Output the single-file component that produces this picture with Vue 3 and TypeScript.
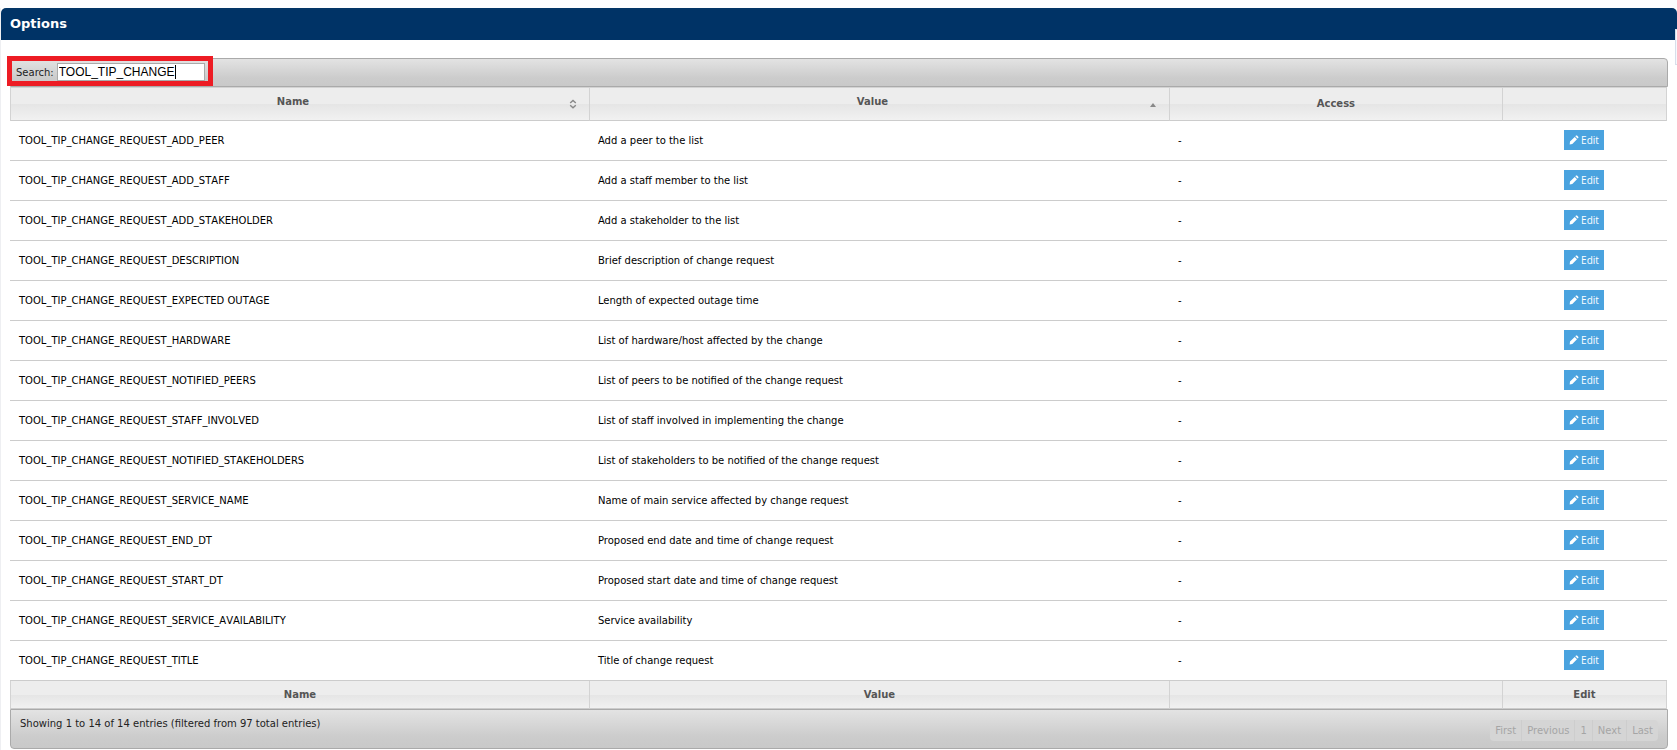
<script setup lang="ts">
import { computed, onMounted, ref } from 'vue'

interface Option {
  name: string
  value: string
}

const prefix = 'TOOL_TIP_CHANGE_REQUEST_'
const options: Option[] = [
  { name: 'ADD_PEER', value: 'Add a peer to the list' },
  { name: 'ADD_STAFF', value: 'Add a staff member to the list' },
  { name: 'ADD_STAKEHOLDER', value: 'Add a stakeholder to the list' },
  { name: 'DESCRIPTION', value: 'Brief description of change request' },
  { name: 'EXPECTED OUTAGE', value: 'Length of expected outage time' },
  { name: 'HARDWARE', value: 'List of hardware/host affected by the change' },
  { name: 'NOTIFIED_PEERS', value: 'List of peers to be notified of the change request' },
  { name: 'STAFF_INVOLVED', value: 'List of staff involved in implementing the change' },
  { name: 'NOTIFIED_STAKEHOLDERS', value: 'List of stakeholders to be notified of the change request' },
  { name: 'SERVICE_NAME', value: 'Name of main service affected by change request' },
  { name: 'END_DT', value: 'Proposed end date and time of change request' },
  { name: 'START_DT', value: 'Proposed start date and time of change request' },
  { name: 'SERVICE_AVAILABILITY', value: 'Service availability' },
  { name: 'TITLE', value: 'Title of change request' },
].map((o) => ({ name: prefix + o.name, value: o.value }))

const search = ref('TOOL_TIP_CHANGE')
const searchBox = ref<HTMLInputElement | null>(null)
const shown = computed(() => {
  const q = search.value.toLowerCase()
  return options.filter((o) => (o.name + ' ' + o.value).toLowerCase().includes(q))
})

// Text caret, kept at the end of the typed text
const pen = document.createElement('canvas').getContext('2d')
const caretLeft = computed(() => {
  if (!pen) return 2
  pen.font = '12px "Liberation Sans", Arial, sans-serif'
  return Math.min(144, Math.ceil(pen.measureText(search.value).width) + 2)
})

onMounted(() => searchBox.value?.focus())
</script>

<template>
  <main class="panel">
    <h1 class="title">Options</h1>
    <span class="side-tab"></span>
    <div class="content">
      <div class="bar toolbar">
        <div class="search">
          <label for="search">Search:</label>
          <span class="field">
            <input id="search" ref="searchBox" v-model="search" type="text" />
            <span class="caret" :style="{ left: caretLeft + 'px' }"></span>
          </span>
        </div>
      </div>
      <table>
        <colgroup>
          <col class="wide" />
          <col class="wide" />
          <col class="access" />
          <col />
        </colgroup>
        <thead>
          <tr>
            <th scope="col">
              <button type="button" class="sort">
                <span>Name</span>
                <svg width="8" height="10" viewBox="0 0 8 10"><path d="M1.2 4 4 1.4 6.8 4M1.2 6.2 4 8.8 6.8 6.2" fill="none" stroke="#888" stroke-width="1.4" /></svg>
              </button>
            </th>
            <th scope="col" aria-sort="ascending">
              <button type="button" class="sort">
                <span>Value</span>
                <svg width="8" height="10" viewBox="0 0 8 10"><path d="M1 8 4 4 7 8Z" fill="#888" /></svg>
              </button>
            </th>
            <th scope="col">Access</th>
            <td></td>
          </tr>
        </thead>
        <tbody>
          <tr v-for="o in shown" :key="o.name">
            <td class="name">{{ o.name }}</td>
            <td>{{ o.value }}</td>
            <td>-</td>
            <td class="action">
              <button type="button" class="edit">
                <svg width="10" height="10" viewBox="0 0 10 10"><path d="M1 6.6 5.7 1.9 8 4.2 3.3 8.9 .7 9.4ZM6.3 1.3 7 .6Q7.5.2 8 .6L9.2 1.8Q9.7 2.3 9.3 2.9L8.6 3.6Z" fill="#fff" /></svg>
                <span>Edit</span>
              </button>
            </td>
          </tr>
        </tbody>
        <tfoot>
          <tr>
            <th>Name</th>
            <th>Value</th>
            <td></td>
            <th>Edit</th>
          </tr>
        </tfoot>
      </table>
      <div class="bar footer">
        <p class="info">Showing 1 to 14 of 14 entries (filtered from 97 total entries)</p>
        <nav class="pager" aria-label="Pages">
          <button v-for="p in ['First', 'Previous', '1', 'Next', 'Last']" :key="p" type="button" disabled>{{ p }}</button>
        </nav>
      </div>
    </div>
  </main>
</template>

<style>
body {
  background: #fbfcfe;
}
</style>

<style scoped>
.panel {
  position: relative;
  margin-top: 8px;
  padding-left: 1px;
  background: linear-gradient(to right, #eeeff2 1px, #fff 1px);
  font-family: "DejaVu Sans", Verdana, sans-serif;
  font-size: 10px;
  line-height: 13px;
  color: #000;
}
.title {
  margin: 0;
  padding: 8px 9px;
  border-radius: 5px 5px 0 0;
  background: #036;
  color: #fff;
  font-size: 13px;
  line-height: 16px;
}
.side-tab {
  position: absolute;
  top: 21px;
  right: 0;
  width: 2px;
  height: 36px;
  box-sizing: border-box;
  border: 1px solid #d8dfeb;
  border-right: 0;
  background: #f7f9fd;
}
.content {
  padding: 18px 9px 1px;
}
.bar {
  border: 1px solid #aaa;
  background: linear-gradient(#e3e3e3, #ccc 70%, #c9c9c9);
  color: #222;
}
.toolbar {
  display: flex;
  border-radius: 4px 4px 0 0;
  padding: 2px 1px 5px;
}
.search {
  display: flex;
  align-items: flex-end;
  gap: 3px;
  padding: 0 3px 0 4px;
  height: 20px;
  outline: 5px solid #ed1c24;
}
.search label {
  padding-bottom: 2px;
}
.field {
  position: relative;
  display: flex;
}
.search input {
  box-sizing: border-box;
  width: 148px;
  height: 18px;
  padding: 0 1px;
  border: 1px solid #aaa;
  outline: 0;
  background: #fff;
  color: #000;
  caret-color: transparent;
  font: 12px "Liberation Sans", Arial, sans-serif;
}
.caret {
  position: absolute;
  top: 2px;
  width: 1px;
  height: 14px;
  background: #000;
}
table {
  width: calc(100% - 1px);
  border-collapse: separate;
  border-spacing: 0;
  table-layout: fixed;
}
.wide {
  width: 35%;
}
.access {
  width: 20.1%;
}
thead tr,
tfoot tr {
  background: linear-gradient(#ededed 50%, #e5e5e5 50%, #f2f2f2);
}
thead > tr > *,
tfoot > tr > * {
  box-sizing: border-box;
  padding: 0 9px;
  border-right: 1px solid #d3d3d3;
  border-bottom: 1px solid #ccc;
  color: #555;
}
thead > tr > * {
  height: 34px;
  padding-bottom: 1px;
  border-top: 1px solid #d3d3d3;
}
tfoot > tr > * {
  height: 28px;
}
thead > tr > :first-child,
tfoot > tr > :first-child {
  border-left: 1px solid #d3d3d3;
}
button {
  font: inherit;
  color: inherit;
}
.sort {
  display: flex;
  align-items: center;
  gap: 3px;
  width: 100%;
  padding: 0 3px 0 0;
  border: 0;
  background: none;
}
.sort span {
  flex: 1;
  padding-bottom: 4px;
}
tbody td {
  box-sizing: border-box;
  height: 40px;
  padding: 13px 8px;
  border-bottom: 1px solid #ccc;
  vertical-align: top;
}
tbody .name {
  padding-left: 9px;
  font-kerning: none;
}
tbody .action {
  padding: 9px 10px 9px 8px;
  text-align: center;
}
.edit {
  display: inline-flex;
  align-items: center;
  gap: 2px;
  height: 20px;
  padding: 0 5px;
  border: 0;
  background: #4aa3df;
  color: #fff;
  font: 10px/20px "Open Sans", sans-serif;
  vertical-align: top;
}
.footer {
  display: flex;
  justify-content: space-between;
  align-items: flex-start;
  padding: 7px 9px;
  border-radius: 0 0 4px 4px;
}
.info {
  margin: 0;
}
.pager {
  display: flex;
  margin-top: 3px;
  border-radius: 4px;
  overflow: hidden;
}
.pager button {
  height: 21px;
  padding: 0 5px;
  border: 0;
  border-right: 1px solid #cdcdcd;
  background: #d5d5d5;
  color: #a5a5a5;
}
.pager button:last-child {
  border-right: 0;
}
</style>
